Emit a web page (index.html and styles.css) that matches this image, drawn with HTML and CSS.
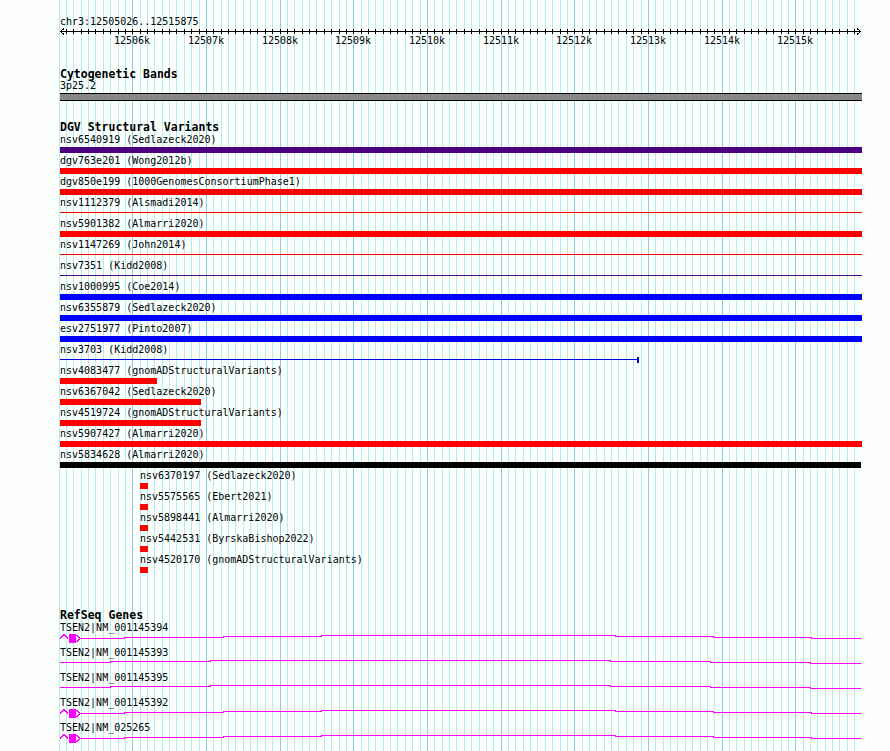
FILE: index.html
```html
<!DOCTYPE html>
<html lang="en">

<head>
    <meta charset="UTF-8">
    <meta name="viewport" content="width=device-width, initial-scale=1.0">
    <title>chr3:12505026..12515875</title>
    <link rel="stylesheet" href="styles.css">
</head>

<body>
    <div class="view">
        <div class="grid" id="grid"></div>

        <div class="locus">chr3:12505026..12515875</div>

        <div class="ruler">
            <svg class="ruler-axis" width="802" height="7" viewBox="0 0 802 7">
                <path class="axis" d="M0 3.5H801" />
                <path class="axis" d="M4 0.5L0.5 3.5L4 6.5M797 0.5L800.5 3.5L797 6.5" />
                <path class="axis" id="tickPath" d="" />
            </svg>
            <div class="ruler-labels" id="rulerLabels"></div>
        </div>

        <section class="track cyto">
            <h2>Cytogenetic Bands</h2>
            <div class="name">3p25.2</div>
            <div class="band"></div>
        </section>

        <section class="track dgv">
            <h2>DGV Structural Variants</h2>

            <div class="feature">
                <div class="name">nsv6540919 (Sedlazeck2020)</div>
                <div class="glyph"><div class="bar indigo"></div></div>
            </div>
            <div class="feature">
                <div class="name">dgv763e201 (Wong2012b)</div>
                <div class="glyph"><div class="bar red"></div></div>
            </div>
            <div class="feature">
                <div class="name">dgv850e199 (1000GenomesConsortiumPhase1)</div>
                <div class="glyph"><div class="bar red"></div></div>
            </div>
            <div class="feature">
                <div class="name">nsv1112379 (Alsmadi2014)</div>
                <div class="glyph"><div class="line red"></div></div>
            </div>
            <div class="feature">
                <div class="name">nsv5901382 (Almarri2020)</div>
                <div class="glyph"><div class="bar red"></div></div>
            </div>
            <div class="feature">
                <div class="name">nsv1147269 (John2014)</div>
                <div class="glyph"><div class="line red"></div></div>
            </div>
            <div class="feature">
                <div class="name">nsv7351 (Kidd2008)</div>
                <div class="glyph"><div class="line indigo"></div></div>
            </div>
            <div class="feature">
                <div class="name">nsv1000995 (Coe2014)</div>
                <div class="glyph"><div class="bar blue"></div></div>
            </div>
            <div class="feature">
                <div class="name">nsv6355879 (Sedlazeck2020)</div>
                <div class="glyph"><div class="bar blue"></div></div>
            </div>
            <div class="feature">
                <div class="name">esv2751977 (Pinto2007)</div>
                <div class="glyph"><div class="bar blue"></div></div>
            </div>
            <div class="feature">
                <div class="name">nsv3703 (Kidd2008)</div>
                <div class="glyph">
                    <div class="line blue" style="width: 577px"></div>
                    <div class="end-tick"></div>
                </div>
            </div>
            <div class="feature">
                <div class="name">nsv4083477 (gnomADStructuralVariants)</div>
                <div class="glyph"><div class="bar red" style="width: 97px"></div></div>
            </div>
            <div class="feature">
                <div class="name">nsv6367042 (Sedlazeck2020)</div>
                <div class="glyph"><div class="bar red" style="width: 141px"></div></div>
            </div>
            <div class="feature">
                <div class="name">nsv4519724 (gnomADStructuralVariants)</div>
                <div class="glyph"><div class="bar red" style="width: 141px"></div></div>
            </div>
            <div class="feature">
                <div class="name">nsv5907427 (Almarri2020)</div>
                <div class="glyph"><div class="bar red"></div></div>
            </div>
            <div class="feature">
                <div class="name">nsv5834628 (Almarri2020)</div>
                <div class="glyph"><div class="bar black" style="width: 801px"></div></div>
            </div>
            <div class="feature" style="margin-left: 80px">
                <div class="name">nsv6370197 (Sedlazeck2020)</div>
                <div class="glyph"><div class="bar red small"></div></div>
            </div>
            <div class="feature" style="margin-left: 80px">
                <div class="name">nsv5575565 (Ebert2021)</div>
                <div class="glyph"><div class="bar red small"></div></div>
            </div>
            <div class="feature" style="margin-left: 80px">
                <div class="name">nsv5898441 (Almarri2020)</div>
                <div class="glyph"><div class="bar red small"></div></div>
            </div>
            <div class="feature" style="margin-left: 80px">
                <div class="name">nsv5442531 (ByrskaBishop2022)</div>
                <div class="glyph"><div class="bar red small"></div></div>
            </div>
            <div class="feature" style="margin-left: 80px">
                <div class="name">nsv4520170 (gnomADStructuralVariants)</div>
                <div class="glyph"><div class="bar red small"></div></div>
            </div>
        </section>

        <section class="track genes">
            <h2>RefSeq Genes</h2>

            <div class="gene">
                <div class="name">TSEN2|NM_001145394</div>
                <svg class="model" width="802" height="12" viewBox="0 0 802 12">
                    <path class="intron" d="M0 4.5L4 0.5L8 4.5" />
                    <rect class="exon" x="9" y="0" width="7" height="9" />
                    <path class="intron" d="M16.5 1L20 4.5L16.5 8" />
                    <path class="intron" d="M20 4.5H64V3.5H163V2.5H261V1.5H555V2.5H653V3.5H751V4.5H801" />
                </svg>
            </div>
            <div class="gene">
                <div class="name">TSEN2|NM_001145393</div>
                <svg class="model" width="802" height="12" viewBox="0 0 802 12">
                    <path class="intron" d="M0 3.5H50V2.5H150V1.5H550V2.5H650V3.5H750V4.5H801" />
                </svg>
            </div>
            <div class="gene">
                <div class="name">TSEN2|NM_001145395</div>
                <svg class="model" width="802" height="12" viewBox="0 0 802 12">
                    <path class="intron" d="M0 3.5H50V2.5H150V1.5H550V2.5H650V3.5H750V4.5H801" />
                </svg>
            </div>
            <div class="gene">
                <div class="name">TSEN2|NM_001145392</div>
                <svg class="model" width="802" height="12" viewBox="0 0 802 12">
                    <path class="intron" d="M0 4.5L4 0.5L8 4.5" />
                    <rect class="exon" x="9" y="0" width="7" height="9" />
                    <path class="intron" d="M16.5 1L20 4.5L16.5 8" />
                    <path class="intron" d="M20 4.5H64V3.5H163V2.5H261V1.5H555V2.5H653V3.5H751V4.5H801" />
                </svg>
            </div>
            <div class="gene">
                <div class="name">TSEN2|NM_025265</div>
                <svg class="model" width="802" height="12" viewBox="0 0 802 12">
                    <path class="intron" d="M0 4.5L4 0.5L8 4.5" />
                    <rect class="exon" x="9" y="0" width="7" height="9" />
                    <path class="intron" d="M16.5 1L20 4.5L16.5 8" />
                    <path class="intron" d="M20 4.5H64V3.5H163V2.5H261V1.5H555V2.5H653V3.5H751V4.5H801" />
                </svg>
            </div>
        </section>
    </div>

    <script>
        // visible region chr3:12505026..12515875, track area starts at x = 60
        const viewStart = 12505026;
        const pxPerBp = 0.07367;

        function xOf(bp) {
            return Math.round(60.5 + (bp - viewStart) * pxPerBp);
        }

        const grid = document.getElementById("grid");
        const labels = document.getElementById("rulerLabels");
        let ticks = "";

        for (let bp = 12505000; bp <= 12515800; bp += 100) {
            const x = xOf(bp);
            const line = document.createElement("div");
            line.className = "gridline";
            if (bp % 1000 === 0 && bp > 12505000) {
                line.className += " major";
                const label = document.createElement("span");
                label.className = "tick-label";
                label.textContent = (bp / 1000) + "k";
                label.style.left = (x - 60) + "px";
                labels.appendChild(label);
            }
            line.style.left = x + "px";
            grid.appendChild(line);

            if (bp > 12505000) {
                ticks += "M" + (x - 60 + 0.5) + " 1V6";
            }
        }

        document.getElementById("tickPath").setAttribute("d", ticks);
    </script>
</body>

</html>
```

FILE: styles.css
```css
body {
    margin: 0;
    background-color: #fdfffd;
    font-family: "DejaVu Sans Mono", "Liberation Mono", monospace;
    font-size: 10px;
    line-height: 12px;
    color: #000000;
}

.view {
    position: relative;
    box-sizing: border-box;
    width: 890px;
    min-height: 751px;
    padding: 15px 28px 0 60px;
    overflow: hidden;
}

.grid {
    position: absolute;
    top: 0;
    left: 0;
    right: 0;
    bottom: 0;
}

.gridline {
    position: absolute;
    top: 0;
    bottom: 0;
    width: 1px;
    background-color: #afeeee;
}

.gridline.major {
    background-color: #87ceeb;
}

.locus,
.ruler,
.track {
    position: relative;
}

.locus {
    padding-top: 1px;
    line-height: 11px;
}

.ruler {
    margin-top: 1px;
}

.ruler-axis {
    display: block;
    shape-rendering: crispEdges;
}

.axis {
    fill: none;
    stroke: #000000;
    stroke-width: 1;
}

.ruler-labels {
    position: relative;
    height: 12px;
}

.tick-label {
    position: absolute;
    top: 0;
    transform: translateX(-50%);
    white-space: nowrap;
}

h2 {
    margin: 0;
    font-size: 11.5px;
    line-height: 11px;
    font-weight: bold;
}

.name {
    padding-top: 1px;
    white-space: nowrap;
}

.cyto {
    margin-top: 21px;
}

.cyto h2 {
    padding-top: 1px;
}

.cyto .name {
    padding-top: 0;
}

.band {
    height: 6px;
    margin-top: 1px;
    background-color: #888888;
    border-top: 1px solid #000000;
    border-bottom: 1px solid #000000;
}

.dgv {
    margin-top: 21px;
}

.glyph {
    display: flex;
    align-items: flex-start;
    height: 6px;
    margin: 1px 0 1px;
}

.bar {
    width: 100%;
    height: 6px;
}

.bar.small {
    width: 8px;
}

.line {
    width: 100%;
    height: 1px;
    margin-top: 2px;
}

.end-tick {
    width: 2px;
    height: 6px;
    background-color: #0000dd;
}

.red {
    background-color: #ff0000;
}

.blue {
    background-color: #0000ff;
}

.line.blue {
    background-color: #0000dd;
}

.indigo {
    background-color: #4b0082;
}

.black {
    background-color: #000000;
}

.genes {
    margin-top: 37px;
}

.model {
    display: block;
    shape-rendering: crispEdges;
}

.intron {
    fill: none;
    stroke: #ff00ff;
    stroke-width: 1;
}

.exon {
    fill: #ff00ff;
}
```
